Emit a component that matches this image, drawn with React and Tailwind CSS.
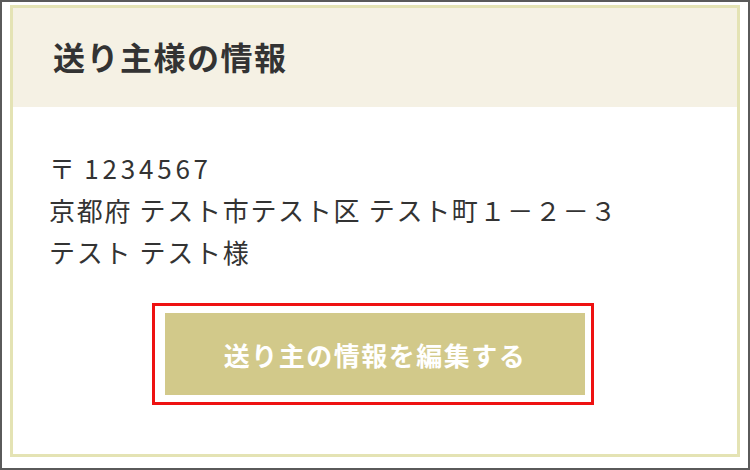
export default function App() {
  return (
    <div className="w-[750px] h-[470px] bg-white border-2 border-[#5a5a5a] pt-[3px] pl-[8px] pr-[8px] pb-[11px] box-border" style={{ fontFamily: '"Noto Sans CJK JP", "Noto Sans", sans-serif' }}>
      <div className="h-full border-[3px] border-[#e4e3b4] flex flex-col">
        <div className="h-[99px] bg-[#f5f1e4] flex items-center pl-[40px] pb-[4px]">
          <h2 className="text-[32px] font-bold text-[#333] tracking-[1.5px] leading-none">送り主様の情報</h2>
        </div>
        <div className="flex-1 bg-white pt-[40px] pl-[36px] flex flex-col">
          <div className="text-[26px] text-[#333] leading-[42px] tracking-[1.7px]">
            <p>〒 <span className="tracking-[3.8px]">1234567</span></p>
            <p>京都府 テスト市テスト区 テスト町１－２－３</p>
            <p>テスト テスト様</p>
          </div>
          <div className="flex justify-center pr-[36px] mt-[30px]">
            <div className="border-[3px] border-[#ee1111] pt-[7px] pb-[7px] pl-[10px] pr-[6px] ml-[-4px]">
              <button className="w-[420px] h-[82px] bg-[#d2c98a] text-white text-[26px] font-bold flex items-center justify-center tracking-[1.5px]">
                送り主の情報を編集する
              </button>
            </div>
          </div>
        </div>
      </div>
    </div>
  );
}
